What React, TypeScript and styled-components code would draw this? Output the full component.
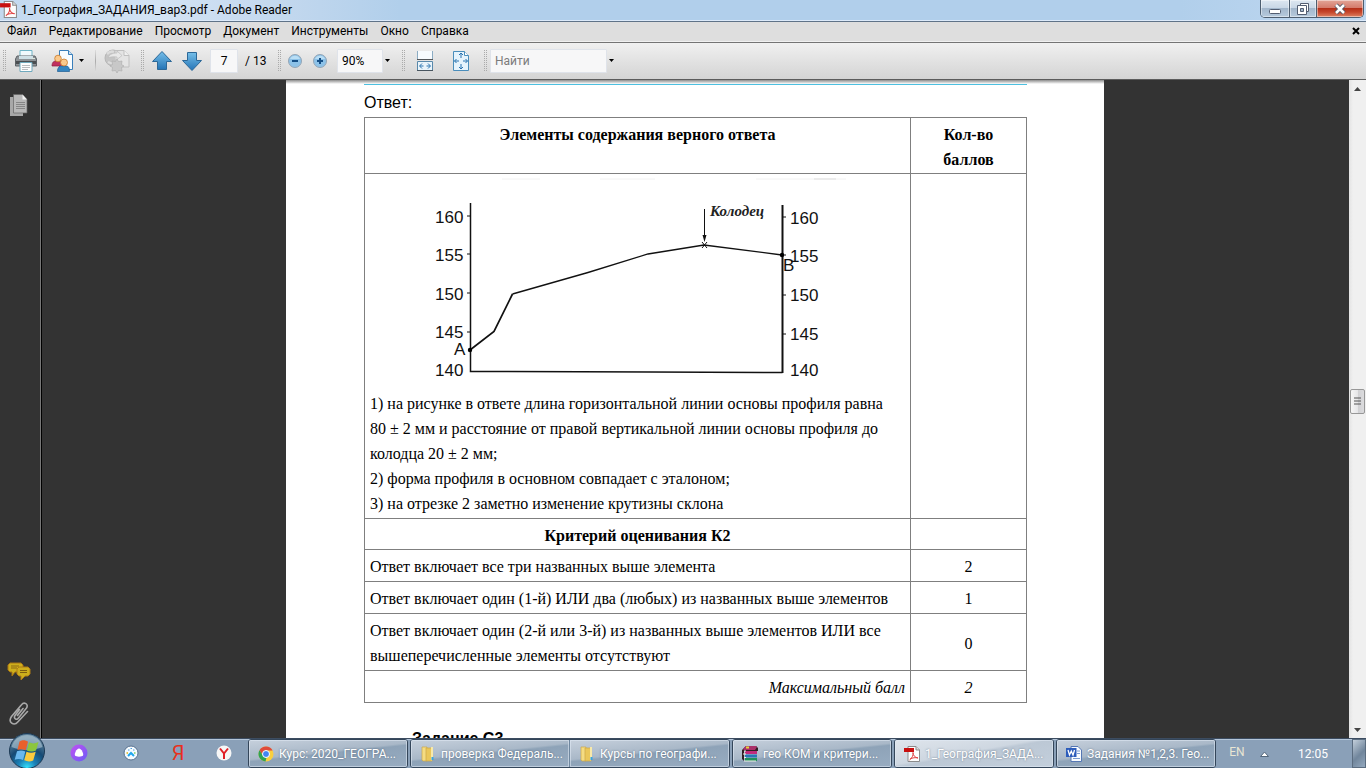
import React from 'react';
import styled, { createGlobalStyle } from 'styled-components';

const uiFont = 'Roboto, "Noto Sans", sans-serif';
const serifFont = '"Liberation Serif", "Times New Roman", serif';
const sansFont = '"Liberation Sans", Arial, sans-serif';

const GlobalStyle = createGlobalStyle`
  * { box-sizing: border-box; }
  body { margin: 0; overflow: hidden; }
  button { padding: 0; border: 0; background: none; color: inherit; font: inherit; }
  svg { display: block; }
`;

const Desktop = styled.div`
  display: flex;
  flex-direction: column;
  height: 100vh;
  font-family: ${uiFont};
  font-size: 12px;
  color: #000;
`;

/* ---------- window frame ---------- */

const TitleBar = styled.header`
  display: flex;
  align-items: flex-start;
  height: 22px;
  flex: none;
  border-bottom: 1px solid #5f7388;
  box-shadow: inset 0 -1px #dceafa;
  background: linear-gradient(90deg, #c3d9f0 0, #d3e3f4 160px, #c3d8ee 280px, #b1cfeb 400px, #b1cfeb 1180px, #c0d8f1 100%);
`;

const TitleText = styled.h1`
  flex: 1;
  margin: 0 0 0 4px;
  font-size: 12px;
  line-height: 21px;
  font-weight: 400;
`;

const WindowButtons = styled.div`
  display: flex;
  height: 18px;
  margin-right: 2px;
  border: 1px solid #4d5e70;
  border-top: 0;
  border-radius: 0 0 5px 5px;
  overflow: hidden;
`;

const WindowButton = styled.button<{ $wide?: boolean; $close?: boolean }>`
  display: flex;
  align-items: center;
  justify-content: center;
  width: ${(p) => (p.$close ? 47 : p.$wide ? 28 : 27)}px;
  border-left: ${(p) => (p.$wide ? 0 : 1)}px solid #4d5e70;
  box-shadow: inset 0 0 0 1px rgba(255, 255, 255, 0.45);
  background: ${(p) =>
    p.$close
      ? 'linear-gradient(#e3a598 0, #d4796a 8px, #b32d17 8px, #c5452b 12px, #dd8264 100%)'
      : 'linear-gradient(#dde7f1 0, #c9d7e6 8px, #a2b6cb 8px, #b6cadd 100%)'};
`;

const MenuBar = styled.nav`
  display: flex;
  align-items: center;
  gap: 12px;
  height: 21px;
  flex: none;
  padding: 0 6px 2px 7px;
  border-bottom: 1px solid #747474;
  background: #dedede;
  box-shadow: inset 0 -1px #f0f0f0;
`;

const MenuItem = styled.button`
  font-size: 12px;
  line-height: 16px;
`;

const CloseDocument = styled.button`
  margin-left: auto;
`;

const Toolbar = styled.div`
  display: flex;
  align-items: center;
  height: 37px;
  flex: none;
  padding: 0 0 1px 2px;
  border-bottom: 1px solid #5c5c5c;
  background: linear-gradient(#f0f0f0, #d4d4d4);
`;

const Grip = styled.span<{ $gap?: number }>`
  width: 5px;
  height: 22px;
  margin-left: ${(p) => p.$gap ?? 0}px;
  background: conic-gradient(#aaa 25%, transparent 0) 0 0 / 2px 2px;
`;

const Divider = styled.span`
  width: 1px;
  height: 22px;
  margin-left: 10px;
  background: linear-gradient(#ddd, #aaa 50%, #ddd);
`;

const ToolButton = styled.button<{ $gap: number; $width: number }>`
  display: flex;
  justify-content: center;
  width: ${(p) => p.$width}px;
  margin-left: ${(p) => p.$gap}px;
  flex: none;
`;

const Field = styled.input<{ $gap: number; $width: number; $center?: boolean }>`
  width: ${(p) => p.$width}px;
  height: 24px;
  margin-left: ${(p) => p.$gap}px;
  padding: 0 4px;
  border: 1px solid #dfe3ea;
  border-radius: 1px;
  outline: 0;
  background: #f7f7f8;
  font-family: ${uiFont};
  font-size: 12px;
  text-align: ${(p) => (p.$center ? 'center' : 'left')};
  &::placeholder { color: #7b7b7b; opacity: 1; }
`;

const PageCount = styled.span`
  width: 22px;
  margin-left: 7px;
  font-size: 12px;
  white-space: nowrap;
`;

/* ---------- work area ---------- */

const WorkArea = styled.div`
  display: flex;
  flex: 1;
  min-height: 0;
  background: #333;
`;

const SidePanel = styled.aside`
  display: flex;
  flex-direction: column;
  align-items: center;
  width: 42px;
  padding: 14px 3px 12px 0;
  border-right: 1px solid #000;
  box-shadow: inset -1px 0 #777;
  flex: none;
`;

const SideButton = styled.button<{ $push?: boolean }>`
  margin-top: ${(p) => (p.$push ? 'auto' : 0)};
  margin-bottom: ${(p) => (p.$push ? '20px' : 0)};
`;

const Viewport = styled.main`
  flex: 1;
  min-width: 0;
  overflow: hidden;
`;

const Sheet = styled.article`
  max-width: 818px;
  min-height: 100%;
  margin: 0 auto;
  padding: 4px 77px 0 78px;
  background: linear-gradient(#8d8d8d, #fff 4px);
`;

const TopRule = styled.hr`
  height: 1px;
  margin: 0;
  border: 0;
  background: #4dc0e0;
`;

const AnswerLabel = styled.p`
  margin: 0;
  padding: 5px 0 2px;
  font: 16px/25px ${sansFont};
`;

const CriteriaTable = styled.table`
  width: 100%;
  border-collapse: collapse;
  table-layout: fixed;
  font: 16px/25px ${serifFont};
`;

const HeadCell = styled.th`
  padding: 4px 5px 1px;
  border: 1px solid #7f7f7f;
  vertical-align: top;
`;

const Cell = styled.td<{ $align?: string; $italic?: boolean }>`
  padding: 4px 5px 2px;
  border: 1px solid #7f7f7f;
  text-align: ${(p) => p.$align ?? 'left'};
  font-style: ${(p) => (p.$italic ? 'italic' : 'normal')};
`;

const ScoreCol = styled.col`
  width: 116px;
`;

const Line = styled.p`
  margin: 0;
`;

const Profile = styled.svg`
  width: 440px;
  height: 213px;
  margin-left: 50px;
`;

const NextTask = styled.h2`
  margin: 23px 0 0 48px;
  font: bold 16px/25px ${sansFont};
`;

const ScrollBar = styled.div`
  display: flex;
  flex-direction: column;
  width: 18px;
  flex: none;
  border-left: 1px solid #333;
  background: linear-gradient(90deg, #e3e3e3, #f0f0f0 4px);
`;

const ScrollArrow = styled.button`
  display: flex;
  align-items: center;
  justify-content: center;
  height: 17px;
`;

const TrackPart = styled.div<{ $share: number }>`
  flex: ${(p) => p.$share} 1 0;
`;

const Thumb = styled.button`
  display: flex;
  align-items: center;
  justify-content: center;
  height: 25px;
  margin: 0 1px;
  border: 1px solid #979797;
  border-radius: 2px;
  background: linear-gradient(90deg, #f6f6f6, #e6e6e8 50%, #cfcfd2 50%, #dcdcde);
`;

/* ---------- taskbar ---------- */

const Taskbar = styled.footer`
  position: relative;
  display: flex;
  height: 30px;
  flex: none;
  padding-left: 248px;
  border-top: 1px solid #3c4c60;
  box-shadow: inset 0 1px #b4c6da;
  background: #8aa0b8;
  color: #fff;
`;

const StartButton = styled.button`
  position: absolute;
  left: 8px;
  top: -6px;
`;

const QuickLaunch = styled.div`
  position: absolute;
  left: 70px;
  top: 5px;
  display: flex;
  gap: 31px;
`;

const QuickButton = styled.button<{ $width: number }>`
  display: flex;
  justify-content: center;
  width: ${(p) => p.$width}px;
`;

const TaskGroup = styled.div`
  display: flex;
  height: 29px;
  margin-right: 2px;
  border: 1px solid #34465a;
  border-radius: 3px;
  overflow: hidden;
`;

const Task = styled.button<{ $active?: boolean; $next?: boolean }>`
  display: flex;
  align-items: center;
  gap: 5px;
  width: ${(p) => (p.$next ? 160 : 158)}px;
  padding-left: 9px;
  border-left: ${(p) => (p.$next ? 1 : 0)}px solid #6f879f;
  box-shadow: inset 0 0 0 1px rgba(225, 235, 245, 0.55);
  background: ${(p) =>
    p.$active
      ? 'linear-gradient(170deg, #dfe5ec 0, #ced7e1 45%, #bcc8d5 50%, #c3cfdc 100%)'
      : 'linear-gradient(174deg, #c6d0dc 0, #a9b8c8 45%, #8ea3b8 50%, #98acc1 100%)'};
  font-size: 12px;
  white-space: nowrap;
  text-shadow: 0 0 2px rgba(40, 60, 80, 0.6);
`;

const Tray = styled.div`
  display: flex;
  align-items: center;
  margin-left: auto;
`;

const Language = styled.button`
  width: 16px;
  margin: 0 15px 4px 0;
  color: #e9e6d3;
`;

const Clock = styled.time`
  width: 30px;
  margin: 0 24px 0 29px;
  white-space: nowrap;
`;

const ShowDesktop = styled.button`
  width: 14px;
  height: 29px;
  border: 1px solid #5b6d80;
  background: linear-gradient(135deg, #c3cfdb, #71869c 55%, #94a9bf);
`;

/* ---------- icons ---------- */

const PdfIcon = ({ size = 16 }: { size?: number }) => (
  <svg width={size} height={size + 1} viewBox="0 0 16 17">
    <path d="M4 1.500h8l3.500 3.500v11.500H4z" fill="#fdfdfd" stroke="#8b8b8b" />
    <path d="M12 1.500V5h3.500" fill="#ddd" stroke="#8b8b8b" />
    <path d="M0 3h10v4H0z" fill="#c80f0f" />
    <path d="M9 7.500c.5 3-1 5.500-3.500 7.500M9 7.500c0 3 2 5 5 5.500-3-.7-5-.3-8 1" fill="none" stroke="#e04343" />
  </svg>
);

const PrinterIcon = () => (
  <svg width="24" height="24" viewBox="0 0 24 24">
    <path d="M6 1.500h12V9H6z" fill="#f1fafd" stroke="#6fb4c6" />
    <path d="M3 7h18l1.500 3v7h-21v-7z" fill="#8d9296" stroke="#5d6266" />
    <path d="M5 7h14v3H5z" fill="#cfe0e6" />
    <path d="M2 12h20v3H2z" fill="#4b4e51" />
    <path d="M6 13.500h12v9H6z" fill="#fdfdfd" stroke="#6fa9bd" />
    <path d="M8 16.500h8M8 18.500h8M8 20.500h6" stroke="#b9bcbf" />
    <path d="M18 9.500h3" stroke="#dfe8df" />
  </svg>
);

const ShareIcon = () => (
  <svg width="24" height="24" viewBox="0 0 24 24">
    <path d="M8.500 1.500h9l4 4v15h-13z" fill="#f8fcff" stroke="#3a7fba" />
    <path d="M17.500 1.500v4h4" fill="#cce1f2" stroke="#3a7fba" />
    <path d="M1 17c0-4 2-5 4-5h4c2 0 3 2 3 5z" fill="#c03060" stroke="#8c1c40" strokeWidth=".7" />
    <circle cx="7" cy="9.500" r="3.300" fill="#fbc98c" stroke="#c97a2a" strokeWidth=".8" />
    <path d="M6.500 22.500c0-4 2-5.500 4-5.500h5c2 0 3 2 3 5.500z" fill="#3585c0" stroke="#1c5d94" strokeWidth=".7" />
    <circle cx="13" cy="13.500" r="3.500" fill="#fbc98c" stroke="#c97a2a" strokeWidth=".8" />
  </svg>
);

const GlobeIcon = () => (
  <svg width="28" height="26" viewBox="0 0 28 26">
    <circle cx="10" cy="10" r="8" fill="#c4c4c4" stroke="#b6b6b6" />
    <path d="M4 6c2-2 5-3 7-2M5 14c2 1 4 2 7 1" fill="none" stroke="#dcdcdc" strokeWidth="2.500" />
    <path d="M12 6.500V2.500h9l5 5V19H14" fill="#e4e4e4" stroke="#c0c0c0" />
    <path d="M21 2.500v5h5" fill="#f0f0f0" stroke="#c0c0c0" />
    <path d="M5 9.500c2-4 6-4.500 9-4.500V3l5 4.500-5 4V9c-4-.5-6 0-9 .5z" fill="#e8e8e8" stroke="#bbb" strokeWidth=".7" />
    <path d="m9 13 3.500.5 1.500-2.500 1.500 2.500 3.500-.5-.5 3.500 2.500 1.500-2.500 1.500.5 3.500-3.500-.5-1.500 2.500-1.500-2.500-3.500.5.500-3.500L7 18l2.500-1.500z" fill="#c8c8c8" stroke="#b0b0b0" strokeWidth=".7" />
  </svg>
);

const ArrowIcon = ({ down }: { down?: boolean }) => (
  <svg width="22" height="22" viewBox="0 0 22 22">
    <defs>
      <linearGradient id="arrowBlue" x1="0" y1="0" x2="0" y2="1">
        <stop offset="0" stopColor="#76bfe9" />
        <stop offset="1" stopColor="#2474b6" />
      </linearGradient>
    </defs>
    <path
      d={down ? 'M6.500 2.500h9v8h5L11 20.500 1.500 10.500h5z' : 'M11 1.500l9.500 10h-5v8h-9v-8h-5z'}
      fill="url(#arrowBlue)"
      stroke="#2c6898"
    />
  </svg>
);

const ZoomIcon = ({ plus }: { plus?: boolean }) => (
  <svg width="16" height="16" viewBox="0 0 16 16">
    <circle cx="8" cy="8" r="6.500" fill="#8dc2e8" stroke="#94a5b5" />
    <path d="M3 6a5.500 5.500 0 0 1 10 0z" fill="#b9def5" />
    <path d={plus ? 'M5 8h6M8 5v6' : 'M5 8h6'} stroke="#154f86" strokeWidth="2" />
  </svg>
);

const FitWidthIcon = () => (
  <svg width="20" height="22" viewBox="0 0 20 22">
    <path d="M2.500 1v8.500h15V1" fill="#f7fbfe" stroke="#8bacc3" />
    <path d="M2 9.500h16" stroke="#53575b" />
    <path d="M2.500 21v-9.500h15V21" fill="#e9f4fb" stroke="#5888aa" />
    <path d="M2 20.500h16" stroke="#48555f" />
    <path d="M8.500 16H5m6.500 0H15M7 13.500 4.500 16 7 18.500m6-5 2.500 2.500-2.500 2.500" fill="none" stroke="#2873b0" />
  </svg>
);

const FitPageIcon = () => (
  <svg width="20" height="22" viewBox="0 0 20 22">
    <path d="M2.500 1.500h11l4 4v15h-15z" fill="#e5f3fc" stroke="#4a8dbb" />
    <path d="M13.500 1.500v4h4" fill="#fff" stroke="#4a8dbb" />
    <path d="M10 3v5M10 14v5M3.500 11H8M12 11h4.500M8 5l2-2 2 2M8 17l2 2 2-2M5.500 9l-2 2 2 2M14.500 9l2 2-2 2" fill="none" stroke="#2873b0" />
  </svg>
);

const Caret = () => (
  <svg width="7" height="4" viewBox="0 0 7 4">
    <path d="M1 0h5L3.500 3z" fill="#000" />
  </svg>
);

const PagesIcon = () => (
  <svg width="20" height="23" viewBox="0 0 20 23">
    <path d="M1 3h4v16h9v3H1z" fill="#a8a8a8" />
    <path d="M4.500 .5h9l4.500 5v13.500H4.500z" fill="#b8b8b8" stroke="#666" strokeWidth=".7" />
    <path d="M13.500 .5v5H18z" fill="#f0f0f0" />
    <path d="M7 8.500h9M7 10.500h9M7 12.500h9M7 14.500h9" stroke="#868686" />
  </svg>
);

const CommentsIcon = () => (
  <svg width="24" height="20" viewBox="0 0 24 20">
    <path d="M3 1h11l2 2v5l-2 2H8l-3 4V10H3L1 8V3z" fill="#cdae1c" stroke="#a87412" />
    <path d="M4 4h8M4 6h6" stroke="#8d6913" />
    <path d="M12 5h9l2 2v5l-2 2h-3l-4 4v-4h-2l-2-2V7z" fill="#cdae1c" stroke="#b07d17" />
    <path d="M13 8.500h7M13 10.500h7" stroke="#7d5d10" />
  </svg>
);

const ClipIcon = () => (
  <svg width="22" height="24" viewBox="0 0 22 24">
    <path
      d="M11.500 7.500 7 13.500c-1.800 3 1.500 5 3.500 2.500l8-10c2.500-4-2.500-6.500-5-3.300L3.500 14.500c-4 6 2.500 10 6.500 5.300L19.500 9.500M15 6.500l-5.500 7"
      fill="none"
      stroke="#a9a9a9"
      strokeWidth="1.600"
      strokeLinecap="round"
    />
  </svg>
);

const StartOrb = () => (
  <svg width="38" height="36" viewBox="0 0 38 36">
    <defs>
      <radialGradient id="orb" cx=".5" cy=".98" r=".85">
        <stop offset="0" stopColor="#35e6ff" />
        <stop offset=".3" stopColor="#1b82b8" />
        <stop offset=".65" stopColor="#164a74" />
        <stop offset="1" stopColor="#5c8099" />
      </radialGradient>
    </defs>
    <circle cx="19" cy="18" r="17.500" fill="url(#orb)" stroke="#1c3954" />
    <path d="M3.500 14a16 16 0 0 1 31 0c-9 4-22 4-31 0z" fill="#c9dbe6" opacity=".5" />
    <path d="M11.500 8.500c3.500-2 6-1.300 8.500.2l-2.300 8.500c-2.500-1.300-5.500-1.400-8.300-.2z" fill="#e8602c" />
    <path d="M21 9.300c3.500 1.600 6 1.400 9.500-.3l-2.500 8.500c-3 1.500-6 1.300-9.200-.1z" fill="#8cc63e" />
    <path d="M9 18.200c3-1.200 5.700-1 8.300.2l-2.300 8.600c-2.700-1.400-5.500-1.400-8.300-.2z" fill="#6ab8ee" />
    <path d="M18.500 18.800c3 1.300 6 1.300 9.200 0l-2.500 8.700c-3 1.400-6 1.200-9-.2z" fill="#fbcb3e" />
  </svg>
);

const AliceIcon = () => (
  <svg width="18" height="18" viewBox="0 0 18 18">
    <defs>
      <linearGradient id="alice" x1="0" y1="0" x2="1" y2="1">
        <stop offset="0" stopColor="#c252f2" />
        <stop offset="1" stopColor="#6b5cf6" />
      </linearGradient>
    </defs>
    <circle cx="9" cy="9" r="8.500" fill="url(#alice)" />
    <path d="M9 4.500c2.500 0 5 5.500 4 7s-7 1.500-8 0 1.500-7 4-7z" fill="#fff" />
  </svg>
);

const GaugeIcon = () => (
  <svg width="16" height="18" viewBox="0 0 16 18">
    <circle cx="8" cy="9" r="7" fill="#f5fbff" stroke="#57718f" />
    <path d="M5 6h1.500M7.500 4.500h1.500M10 6h1.500" stroke="#4b9edc" />
    <path d="M3.500 9H5" stroke="#e8c64b" strokeWidth="2" />
    <path d="M11 9h1.500" stroke="#9bdc8b" strokeWidth="2" />
    <path d="m5 12 3-3 3 3" fill="none" stroke="#20a7ed" strokeWidth="2" />
  </svg>
);

const BrowserIcon = () => (
  <svg width="16" height="18" viewBox="0 0 16 18">
    <circle cx="8" cy="9" r="7.500" fill="#f6f6f6" />
    <path d="m4 4.500 4 5 4-5M8 9v6" fill="none" stroke="#e11f26" strokeWidth="2" />
  </svg>
);

const YandexLetter = styled.span`
  color: #e8301c;
  font: 20px/19px ${uiFont};
`;

const ChromeIcon = () => (
  <svg width="16" height="16" viewBox="0 0 16 16">
    <circle cx="8" cy="8" r="7.500" fill="#f9cf3f" />
    <path d="M1.500 4.200A7.500 7.500 0 0 1 14.600 4.500H8L5 9.800z" fill="#df4b3b" />
    <path d="M1.500 4.200 5 9.800 8.500 11.500 7.500 15.500A7.500 7.500 0 0 1 1.500 4.200z" fill="#30a353" />
    <circle cx="8" cy="8" r="3.500" fill="#4285f4" stroke="#fff" />
  </svg>
);

const FolderIcon = () => (
  <svg width="16" height="18" viewBox="0 0 16 18">
    <path d="M2 2h5v14H3l-1-1z" fill="#f5dc82" stroke="#caa748" strokeWidth=".7" />
    <path d="M6 3h6v13H6z" fill="#eac75a" stroke="#caa748" strokeWidth=".7" />
    <path d="M11 2h2v11l-2 3z" fill="#f8e9a9" />
    <path d="M12.500 12v3" stroke="#3aa4de" strokeWidth="2" />
  </svg>
);

const RarIcon = () => (
  <svg width="16" height="16" viewBox="0 0 16 16">
    <path d="M0 4 4 0h10l2 2v3H2v10L0 13z" fill="#2f2024" />
    <path d="M1 3 4 0h10l1 1-2 3H2z" fill="#a93169" />
    <path d="M3 5h12v3H3z" fill="#c02b7c" />
    <path d="M3 8.500h12v3H3z" fill="#2676b5" />
    <path d="M3 12h12v3H3z" fill="#1e9157" />
    <path d="M2 5h2M1 8h3M2 11.500h2M2 15h12" stroke="#f1f1e8" />
    <path d="M4 1.500h3" stroke="#e6d43a" strokeWidth="2" />
  </svg>
);

const WordIcon = () => (
  <svg width="16" height="16" viewBox="0 0 16 16">
    <path d="M5 .5h7l3.500 3.500v11.500H5z" fill="#f8fbff" stroke="#5577b4" />
    <path d="M11 5h3M11 7.500h3M7 12.500h7" stroke="#7d9cd0" />
    <path d="M0 2h10.500v9H0z" fill="#2c5cbb" />
    <path d="m2 4 1.500 5L5.300 5 7 9l1.500-5" fill="none" stroke="#fff" strokeWidth="1.300" />
  </svg>
);

const axisLabels = [
  { value: 160, left: 44, right: 45 },
  { value: 155, left: 82, right: 83 },
  { value: 150, left: 121, right: 122 },
  { value: 145, left: 159, right: 161 },
  { value: 140, left: 197, right: 197 },
];

const ProfileChart = () => (
  <Profile viewBox="0 -1 440 213" role="img">
    <path d="M82 0h38M180 0h55M336 0h90" stroke="#f2f2f2" />
    <path d="M394 0h22" stroke="#ddd" />
    <g fill="none" stroke="#111">
      <path d="M50.500 24v168.500l180 .5 132 .5" strokeWidth="1.500" />
      <path d="M362.500 26v168" strokeWidth="2" />
      <path d="M47 37h4M47 75h4M47 114h4M47 153h4M362 38h4M362 76h4M362 116h4M362 155h4" />
      <path d="M50 171 74 152.500 92.500 115" strokeWidth="1.700" />
      <path d="M92.500 115 168 93.500 228 75 284 66 362 76" strokeWidth="1.300" />
      <path d="M284.500 30v30M282 63l5 6M287 63l-5 6" />
    </g>
    <path d="m282.500 56 2 7 2-7z" fill="#111" />
    <circle cx="50" cy="171" r="2.200" />
    <circle cx="362" cy="76" r="2.200" />
    <g fontFamily={sansFont} fontSize="17" fill="#111">
      {axisLabels.map((l) => (
        <React.Fragment key={l.value}>
          <text x="15" y={l.left}>{l.value}</text>
          <text x="370" y={l.right}>{l.value}</text>
        </React.Fragment>
      ))}
      <text x="34" y="176">А</text>
      <text x="363" y="92">В</text>
    </g>
    <text x="290" y="37" fontFamily={serifFont} fontSize="15" fontStyle="italic" fontWeight="bold" fill="#222">
      Колодец
    </text>
  </Profile>
);

const menus = ['Файл', 'Редактирование', 'Просмотр', 'Документ', 'Инструменты', 'Окно', 'Справка'];

const scores = [
  { text: 'Ответ включает все три названных выше элемента', score: 2 },
  { text: 'Ответ включает один (1-й) ИЛИ два (любых) из названных выше элементов', score: 1 },
  { text: 'Ответ включает один (2-й или 3-й) из названных выше элементов ИЛИ все вышеперечисленные элементы отсутствуют', score: 0 },
];

export default function App() {
  return (
    <Desktop>
      <GlobalStyle />
      <TitleBar>
        <PdfIcon size={17} />
        <TitleText>1_География_ЗАДАНИЯ_вар3.pdf - Adobe Reader</TitleText>
        <WindowButtons>
          <WindowButton $wide aria-label="Свернуть">
            <svg width="14" height="14" viewBox="0 0 14 14">
              <rect x="1.500" y="7.500" width="11" height="4" rx="1" fill="#fff" stroke="#535e72" />
            </svg>
          </WindowButton>
          <WindowButton aria-label="Восстановить">
            <svg width="14" height="14" viewBox="0 0 14 14">
              <path d="M4.500 1.500h8v8h-8z" fill="#fff" stroke="#535e72" />
              <path d="M1.500 3.500h9v9h-9z" fill="#fff" stroke="#535e72" />
              <path d="M4.500 6.500h3v3h-3z" fill="#a2b6cb" stroke="#535e72" />
            </svg>
          </WindowButton>
          <WindowButton $close aria-label="Закрыть">
            <svg width="14" height="14" viewBox="0 0 14 14">
              <path d="m3 3 8 8M11 3l-8 8" stroke="#535666" strokeWidth="4.500" />
              <path d="m3 3 8 8M11 3l-8 8" stroke="#fff" strokeWidth="2.500" />
            </svg>
          </WindowButton>
        </WindowButtons>
      </TitleBar>
      <MenuBar>
        {menus.map((m) => (
          <MenuItem key={m}>{m}</MenuItem>
        ))}
        <CloseDocument aria-label="Закрыть документ">
          <svg width="8" height="8" viewBox="0 0 8 8">
            <path d="m1 1 6 6M7 1 1 7" stroke="#000" strokeWidth="2" />
          </svg>
        </CloseDocument>
      </MenuBar>
      <Toolbar>
        <Grip />
        <ToolButton $gap={7} $width={24} aria-label="Печать"><PrinterIcon /></ToolButton>
        <ToolButton $gap={13} $width={24} aria-label="Совместная работа"><ShareIcon /></ToolButton>
        <ToolButton $gap={3} $width={7} aria-label="Меню совместной работы"><Caret /></ToolButton>
        <Divider />
        <ToolButton $gap={7} $width={28} aria-label="Веб"><GlobeIcon /></ToolButton>
        <Grip $gap={9} />
        <ToolButton $gap={6} $width={22} aria-label="Предыдущая страница"><ArrowIcon /></ToolButton>
        <ToolButton $gap={8} $width={22} aria-label="Следующая страница"><ArrowIcon down /></ToolButton>
        <Field $gap={7} $width={28} $center defaultValue="7" aria-label="Страница" />
        <PageCount>/ 13</PageCount>
        <Grip $gap={10} />
        <ToolButton $gap={5} $width={16} aria-label="Уменьшить"><ZoomIcon /></ToolButton>
        <ToolButton $gap={9} $width={16} aria-label="Увеличить"><ZoomIcon plus /></ToolButton>
        <Field $gap={9} $width={46} defaultValue="90%" aria-label="Масштаб" />
        <ToolButton $gap={1} $width={7} aria-label="Выбрать масштаб"><Caret /></ToolButton>
        <Grip $gap={10} />
        <ToolButton $gap={9} $width={20} aria-label="По ширине"><FitWidthIcon /></ToolButton>
        <ToolButton $gap={16} $width={20} aria-label="Страница целиком"><FitPageIcon /></ToolButton>
        <Grip $gap={12} />
        <Field $gap={2} $width={117} placeholder="Найти" aria-label="Найти" />
        <ToolButton $gap={1} $width={7} aria-label="Параметры поиска"><Caret /></ToolButton>
      </Toolbar>
      <WorkArea>
        <SidePanel>
          <SideButton aria-label="Страницы"><PagesIcon /></SideButton>
          <SideButton $push aria-label="Комментарии"><CommentsIcon /></SideButton>
          <SideButton aria-label="Вложения"><ClipIcon /></SideButton>
        </SidePanel>
        <Viewport>
          <Sheet>
            <TopRule />
            <AnswerLabel>Ответ:</AnswerLabel>
            <CriteriaTable>
              <colgroup>
                <col />
                <ScoreCol />
              </colgroup>
              <thead>
                <tr>
                  <HeadCell scope="col">Элементы содержания верного ответа</HeadCell>
                  <HeadCell scope="col">Кол-во<br />баллов</HeadCell>
                </tr>
              </thead>
              <tbody>
                <tr>
                  <Cell>
                    <ProfileChart />
                    <Line>1) на рисунке в ответе длина горизонтальной линии основы профиля равна 80&nbsp;±&nbsp;2&nbsp;мм и расстояние от правой вертикальной линии основы профиля до колодца 20&nbsp;±&nbsp;2&nbsp;мм;</Line>
                    <Line>2) форма профиля в основном совпадает с эталоном;</Line>
                    <Line>3) на отрезке 2 заметно изменение крутизны склона</Line>
                  </Cell>
                  <Cell />
                </tr>
                <tr>
                  <HeadCell>Критерий оценивания К2</HeadCell>
                  <HeadCell />
                </tr>
                {scores.map((s) => (
                  <tr key={s.score}>
                    <Cell>{s.text}</Cell>
                    <Cell $align="center">{s.score}</Cell>
                  </tr>
                ))}
                <tr>
                  <Cell $align="right" $italic>Максимальный балл</Cell>
                  <Cell $align="center" $italic>2</Cell>
                </tr>
              </tbody>
            </CriteriaTable>
            <NextTask>Задание С3</NextTask>
          </Sheet>
        </Viewport>
        <ScrollBar>
          <ScrollArrow aria-label="Вверх">
            <svg width="7" height="4" viewBox="0 0 7 4"><path d="M0 4h7L3.500 0z" fill="#444" /></svg>
          </ScrollArrow>
          <TrackPart $share={292} />
          <Thumb aria-label="Прокрутка">
            <svg width="8" height="8" viewBox="0 0 8 8"><path d="M0 1h7M0 4h7M0 7h7" stroke="#555" /></svg>
          </Thumb>
          <TrackPart $share={308} />
          <ScrollArrow aria-label="Вниз">
            <svg width="7" height="4" viewBox="0 0 7 4"><path d="M0 0h7L3.500 4z" fill="#444" /></svg>
          </ScrollArrow>
        </ScrollBar>
      </WorkArea>
      <Taskbar>
        <StartButton aria-label="Пуск"><StartOrb /></StartButton>
        <QuickLaunch>
          <QuickButton $width={18} aria-label="Алиса"><AliceIcon /></QuickButton>
          <QuickButton $width={24} aria-label="Монитор"><GaugeIcon /></QuickButton>
          <QuickButton $width={8}><YandexLetter>Я</YandexLetter></QuickButton>
          <QuickButton $width={22} aria-label="Браузер"><BrowserIcon /></QuickButton>
        </QuickLaunch>
        <TaskGroup>
          <Task><ChromeIcon />Курс: 2020_ГЕОГРА...</Task>
        </TaskGroup>
        <TaskGroup>
          <Task><FolderIcon />проверка Федераль...</Task>
          <Task $next><FolderIcon />Курсы по географи...</Task>
        </TaskGroup>
        <TaskGroup>
          <Task><RarIcon />гео КОМ и критери...</Task>
        </TaskGroup>
        <TaskGroup>
          <Task $active><PdfIcon />1_География_ЗАДА...</Task>
        </TaskGroup>
        <TaskGroup>
          <Task><WordIcon />Задания №1,2,3. Гео...</Task>
        </TaskGroup>
        <Tray>
          <Language>EN</Language>
          <button aria-label="Скрытые значки">
            <svg width="9" height="6" viewBox="0 0 9 6"><path d="M.5 5.500h8l-4-4.500z" fill="#fff" stroke="#53677c" /></svg>
          </button>
          <Clock>12:05</Clock>
          <ShowDesktop aria-label="Свернуть все окна" />
        </Tray>
      </Taskbar>
    </Desktop>
  );
}
